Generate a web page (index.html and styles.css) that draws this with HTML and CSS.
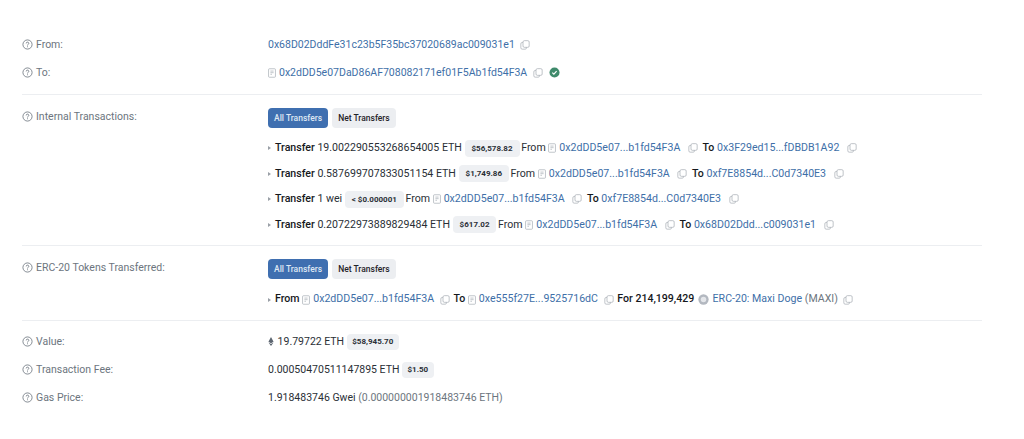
FILE: index.html
```html
<!DOCTYPE html>
<html lang="en">
<head>
    <meta charset="UTF-8">
    <meta name="viewport" content="width=device-width, initial-scale=1.0">
    <title>Transaction Details</title>
    <link rel="stylesheet" href="styles.css">
</head>
<body>
    <svg class="defs" aria-hidden="true">
        <symbol id="i-help" viewBox="0 0 12 12">
            <circle cx="6" cy="6" r="5" fill="none" stroke="currentColor" stroke-width="0.9"/>
            <path d="M4.6 4.8a1.4 1.4 0 1 1 2.1 1.2c-.5.3-.7.5-.7 1" fill="none" stroke="currentColor" stroke-width="0.9"/>
            <circle cx="6" cy="8.5" r="0.55" fill="currentColor"/>
        </symbol>
        <symbol id="i-copy" viewBox="0 0 12 12">
            <rect x="3.6" y="0.8" width="7.4" height="8" rx="1.6" fill="none" stroke="currentColor" stroke-width="0.9"/>
            <path d="M3.6 3H2.6A1.6 1.6 0 0 0 1 4.6v4.8A1.6 1.6 0 0 0 2.6 11h3.6a1.6 1.6 0 0 0 1.6-1.6v-.6" fill="none" stroke="currentColor" stroke-width="0.9"/>
        </symbol>
        <symbol id="i-doc" viewBox="0 0 10 12">
            <rect x="0.7" y="0.7" width="8.6" height="10.6" rx="1" fill="none" stroke="currentColor" stroke-width="0.9"/>
            <path d="M3 3.6h4M3 5.6h4M3 7.6h2" fill="none" stroke="currentColor" stroke-width="0.9"/>
        </symbol>
    </svg>

    <main class="details">
        <section class="section">
            <div class="row">
                <div class="label"><svg class="help"><use href="#i-help"/></svg>From:</div>
                <div class="value">
                    <a class="addr">0x68D02DddFe31c23b5F35bc37020689ac009031e1</a>
                    <svg class="copy"><use href="#i-copy"/></svg>
                </div>
            </div>
            <div class="row">
                <div class="label"><svg class="help"><use href="#i-help"/></svg>To:</div>
                <div class="value">
                    <svg class="doc"><use href="#i-doc"/></svg><a class="addr">0x2dDD5e07DaD86AF708082171ef01F5Ab1fd54F3A</a>
                    <svg class="copy"><use href="#i-copy"/></svg>
                    <svg class="check" viewBox="0 0 12 12">
                        <circle cx="6" cy="6" r="5.5" fill="#3f8a6b"/>
                        <path d="M3.6 6.2l1.7 1.6 3-3.2" fill="none" stroke="#fff" stroke-width="1.3"/>
                    </svg>
                </div>
            </div>
        </section>

        <section class="section">
            <div class="row row-top">
                <div class="label"><svg class="help"><use href="#i-help"/></svg>Internal Transactions:</div>
                <div class="stack">
                    <div class="tabs">
                        <span class="tab tab-active">All Transfers</span>
                        <span class="tab">Net Transfers</span>
                    </div>
                    <div class="transfer">
                        <i class="caret"></i><b>Transfer</b> 19.002290553268654005 ETH
                        <span class="price">$56,578.82</span> From
                        <svg class="doc"><use href="#i-doc"/></svg><a class="addr">0x2dDD5e07...b1fd54F3A</a>
                        <svg class="copy copy-gap"><use href="#i-copy"/></svg>
                        <b>To</b> <a class="addr">0x3F29ed15...fDBDB1A92</a>
                        <svg class="copy copy-gap"><use href="#i-copy"/></svg>
                    </div>
                    <div class="transfer">
                        <i class="caret"></i><b>Transfer</b> 0.587699707833051154 ETH
                        <span class="price">$1,749.86</span> From
                        <svg class="doc"><use href="#i-doc"/></svg><a class="addr">0x2dDD5e07...b1fd54F3A</a>
                        <svg class="copy copy-gap"><use href="#i-copy"/></svg>
                        <b>To</b> <a class="addr">0xf7E8854d...C0d7340E3</a>
                        <svg class="copy copy-gap"><use href="#i-copy"/></svg>
                    </div>
                    <div class="transfer">
                        <i class="caret"></i><b>Transfer</b> 1 wei
                        <span class="price">&lt; $0.000001</span> From
                        <svg class="doc"><use href="#i-doc"/></svg><a class="addr">0x2dDD5e07...b1fd54F3A</a>
                        <svg class="copy copy-gap"><use href="#i-copy"/></svg>
                        <b>To</b> <a class="addr">0xf7E8854d...C0d7340E3</a>
                        <svg class="copy copy-gap"><use href="#i-copy"/></svg>
                    </div>
                    <div class="transfer">
                        <i class="caret"></i><b>Transfer</b> 0.20722973889829484 ETH
                        <span class="price">$617.02</span> From
                        <svg class="doc"><use href="#i-doc"/></svg><a class="addr">0x2dDD5e07...b1fd54F3A</a>
                        <svg class="copy copy-gap"><use href="#i-copy"/></svg>
                        <b>To</b> <a class="addr">0x68D02Ddd...c009031e1</a>
                        <svg class="copy copy-gap"><use href="#i-copy"/></svg>
                    </div>
                </div>
            </div>
        </section>

        <section class="section section-tokens">
            <div class="row row-top">
                <div class="label"><svg class="help"><use href="#i-help"/></svg>ERC-20 Tokens Transferred:</div>
                <div class="stack">
                    <div class="tabs">
                        <span class="tab tab-active">All Transfers</span>
                        <span class="tab">Net Transfers</span>
                    </div>
                    <div class="transfer">
                        <i class="caret"></i><b>From</b>
                        <svg class="doc"><use href="#i-doc"/></svg><a class="addr">0x2dDD5e07...b1fd54F3A</a>
                        <svg class="copy copy-gap"><use href="#i-copy"/></svg>
                        <b>To</b>
                        <svg class="doc"><use href="#i-doc"/></svg><a class="addr">0xe555f27E...9525716dC</a>
                        <svg class="copy copy-gap"><use href="#i-copy"/></svg>
                        <b>For</b> <span class="strong">214,199,429</span>
                        <svg class="token" viewBox="0 0 12 12">
                            <circle cx="6" cy="6" r="5.6" fill="#b3b8c0"/>
                            <circle cx="6" cy="6" r="3" fill="#e4e6ea"/>
                        </svg>
                        <a class="addr">ERC-20: Maxi Doge</a> <span class="muted">(MAXI)</span>
                        <svg class="copy"><use href="#i-copy"/></svg>
                    </div>
                </div>
            </div>
        </section>

        <section class="section-last">
            <div class="row">
                <div class="label"><svg class="help"><use href="#i-help"/></svg>Value:</div>
                <div class="value">
                    <svg class="eth" viewBox="0 0 8 12">
                        <path d="M4 0L0.6 6.2 4 8.2 7.4 6.2zM0.6 7.2L4 12l3.4-4.8L4 9.2z" fill="#5c6570"/>
                    </svg>
                    19.79722 ETH <span class="price">$58,945.70</span>
                </div>
            </div>
            <div class="row">
                <div class="label"><svg class="help"><use href="#i-help"/></svg>Transaction Fee:</div>
                <div class="value">0.00050470511147895 ETH <span class="price">$1.50</span></div>
            </div>
            <div class="row">
                <div class="label"><svg class="help"><use href="#i-help"/></svg>Gas Price:</div>
                <div class="value">1.918483746 Gwei <span class="muted">(0.000000001918483746 ETH)</span></div>
            </div>
        </section>
    </main>
</body>
</html>
```

FILE: styles.css
```css
body {
    font-family: Roboto, "Liberation Sans", sans-serif;
    font-size: 10.5px;
    color: #2a2f36;
    background-color: #fff;
    margin: 0;
    padding: 0;
}

svg {
    vertical-align: middle;
}

.defs {
    display: none;
}

.details {
    width: 960px;
    margin-left: 22px;
    padding-top: 30px;
}

.section {
    border-bottom: 1px solid #eceef1;
    padding: 0 0 8px;
    margin-bottom: 13px;
}

.section-tokens {
    padding-bottom: 8px;
    margin-bottom: 7px;
}

.section-tokens .copy-gap {
    margin-left: 3px;
    margin-right: 1px;
}

.row {
    display: flex;
    align-items: center;
    min-height: 28px;
}

.row-top {
    align-items: flex-start;
}

.label {
    display: flex;
    align-items: center;
    flex: 0 0 246px;
    color: #6c757e;
}

.row-top .label {
    height: 16px;
}

.value {
    white-space: nowrap;
}

.stack {
    display: flex;
    flex-direction: column;
}

.help {
    width: 11px;
    height: 11px;
    margin-right: 3px;
    color: #6c757e;
}

.addr {
    color: #3e6fa8;
}

.copy {
    width: 10px;
    height: 10px;
    margin-left: 3px;
    color: #aab0b7;
}

.copy-gap {
    margin-left: 5px;
    margin-right: 2px;
}

.doc {
    width: 8px;
    height: 10px;
    margin-right: 3px;
    color: #a9afb6;
}

.check {
    width: 11px;
    height: 11px;
    margin-left: 4px;
}

.tabs {
    display: flex;
    gap: 4px;
    margin-bottom: 7px;
}

.tab {
    padding: 0 6px;
    height: 20px;
    line-height: 20px;
    border-radius: 4px;
    background-color: #eceef1;
    font-size: 8.5px;
    font-weight: 500;
    color: #1f2328;
}

.tab-active {
    background-color: #3f6fb0;
    color: #dfe8f4;
}

.transfer {
    height: 25.6px;
    line-height: 25.6px;
    font-size: 10.6px;
    white-space: nowrap;
}

.transfer b,
.strong {
    font-weight: 500;
    color: #15181c;
}

.caret {
    display: inline-block;
    vertical-align: middle;
    width: 0;
    height: 0;
    margin-right: 4px;
    border-left: 3px solid #9aa0a7;
    border-top: 2.5px solid transparent;
    border-bottom: 2.5px solid transparent;
}

.price {
    display: inline-block;
    vertical-align: middle;
    margin: 0 -1px 0 0;
    padding: 0 7px;
    height: 17px;
    line-height: 17px;
    border-radius: 4px;
    background-color: #eef0f3;
    font-size: 8px;
    font-weight: 700;
    color: #2a2f36;
}

.value .price {
    padding: 0 5.5px;
    height: 16px;
    line-height: 16px;
}

.token {
    width: 11px;
    height: 11px;
    margin: 0 1px;
}

.eth {
    width: 6px;
    height: 11px;
    margin-right: 1px;
}

.muted {
    color: #6c757e;
}
```
